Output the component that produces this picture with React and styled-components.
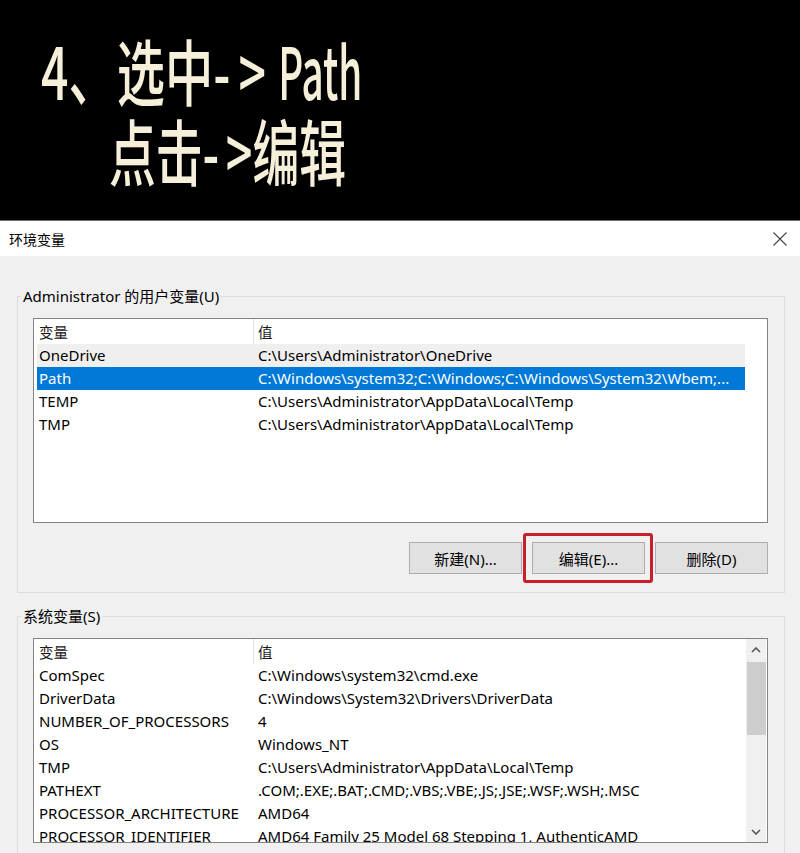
import React from 'react';
import styled, { createGlobalStyle } from 'styled-components';

const Global = createGlobalStyle`
  html, body { margin: 0; padding: 0; background: #f0f0f0; }
  body { font-family: "Noto Sans", "Noto Sans CJK SC", sans-serif; color: #000; }
  * { box-sizing: border-box; }
`;

const Page = styled.div`
  width: 800px;
  height: 853px;
  overflow: hidden;
  display: flex;
  flex-direction: column;
  background: #f0f0f0;
`;

const Banner = styled.header`
  flex-shrink: 0;
  height: 221px;
  background: #000;
  border-bottom: 1px solid #6e6e6e;
  padding-top: 29px;
  font-family: "Noto Sans CJK SC", sans-serif;
  font-size: 72px;
  line-height: 80px;
  color: #f6efd9;
  font-weight: 500;
`;

const BannerLine = styled.div`
  padding-left: ${p => p.$indent}px;
  white-space: nowrap;
`;

const Condensed = styled.span`
  display: inline-block;
  transform: scaleX(${p => p.$scale});
  transform-origin: left center;
`;

const Spaced = styled.span`
  letter-spacing: ${p => p.$gap}px;
`;

const Latin = styled.span`
  display: inline-block;
  transform: scaleX(0.8);
  transform-origin: left center;
`;

const TitleBar = styled.div`
  flex-shrink: 0;
  height: 35px;
  background: #fff;
  display: flex;
  align-items: center;
  justify-content: space-between;
  padding: 0 13px 0 9px;
  font-family: "Noto Sans CJK SC", sans-serif;
  font-size: 14px;
`;

const Body = styled.div`
  flex: 1;
  padding: 30px 15px 0 17px;
`;

const Group = styled.fieldset`
  margin: ${p => (p.$first ? 0 : 13)}px 0 0 0;
  border: 1px solid #dcdcdc;
  padding: 12px 16px 18px 3px;
  min-width: 0;
`;

const Legend = styled.legend`
  padding: 0 2px;
  font-size: 15px;
  line-height: 20px;
`;

const Content = styled.div`
  margin-left: 12px;
`;

const List = styled.div`
  height: 205px;
  background: #fff;
  border: 1px solid #838383;
  display: flex;
  overflow: hidden;
`;

const ListBody = styled.div`
  flex: 1;
  padding-left: 3px;
  overflow: hidden;
`;

const Cols = styled.div`
  width: 708px;
  display: grid;
  grid-template-columns: 216px 492px;
  font-size: 15px;
  white-space: nowrap;
`;

const HeaderRow = styled(Cols)`
  height: 25px;
  line-height: 25px;
  font-family: "Noto Sans CJK SC", sans-serif;
  font-size: 14.5px;
  color: #1a1a1a;
`;

const Row = styled(Cols)`
  height: 23px;
  line-height: 23px;
  background: ${p => (p.$selected ? '#0078d7' : p.$hover ? '#efefef' : 'transparent')};
  color: ${p => (p.$selected ? '#fff' : '#000')};
`;

const Cell = styled.div`
  padding-left: ${p => (p.$value ? 5 : 2)}px;
  overflow: hidden;
  text-overflow: clip;
`;

const HeadCell = styled(Cell)`
  border-left: ${p => (p.$value ? '1px solid #e5e5e5' : 'none')};
  padding-left: ${p => (p.$value ? 4 : 2)}px;
`;

const ButtonRow = styled.div`
  margin-top: 19px;
  display: flex;
  justify-content: flex-end;
  gap: 10px;
`;

const Button = styled.button`
  width: 113px;
  height: 32px;
  background: #e1e1e1;
  border: 1px solid #adadad;
  font-family: "Noto Sans", "Noto Sans CJK SC", sans-serif;
  font-size: 15px;
  color: #000;
  padding: 0;
`;

const Highlight = styled.span`
  position: relative;
  display: inline-flex;
  &::after {
    content: '';
    position: absolute;
    inset: -9px -8px -9px -9px;
    border: 3px solid #c8202a;
    border-radius: 3px;
    pointer-events: none;
  }
`;

const Scrollbar = styled.div`
  width: 20px;
  margin-right: 1px;
  background: #f0f0f0;
  display: flex;
  flex-direction: column;
  align-items: center;
`;

const Arrow = styled.div`
  height: 21px;
  width: 100%;
  display: flex;
  align-items: center;
  justify-content: center;
`;

const Thumb = styled.div`
  margin-top: 2px;
  width: 19px;
  height: 73px;
  background: #cdcdcd;
`;

const Spacer = styled.div`
  flex: 1;
`;

const Chevron = ({ up }) => (
  <svg width="10" height="6" viewBox="0 0 10 6">
    <path
      d={up ? 'M1 5 L5 1 L9 5' : 'M1 1 L5 5 L9 1'}
      fill="none"
      stroke="#555"
      strokeWidth="1.6"
    />
  </svg>
);

const userVars = [
  ['OneDrive', 'C:\\Users\\Administrator\\OneDrive', 'hover'],
  ['Path', 'C:\\Windows\\system32;C:\\Windows;C:\\Windows\\System32\\Wbem;...', 'selected'],
  ['TEMP', 'C:\\Users\\Administrator\\AppData\\Local\\Temp'],
  ['TMP', 'C:\\Users\\Administrator\\AppData\\Local\\Temp'],
];

const sysVars = [
  ['ComSpec', 'C:\\Windows\\system32\\cmd.exe'],
  ['DriverData', 'C:\\Windows\\System32\\Drivers\\DriverData'],
  ['NUMBER_OF_PROCESSORS', '4'],
  ['OS', 'Windows_NT'],
  ['TMP', 'C:\\Users\\Administrator\\AppData\\Local\\Temp'],
  ['PATHEXT', '.COM;.EXE;.BAT;.CMD;.VBS;.VBE;.JS;.JSE;.WSF;.WSH;.MSC'],
  ['PROCESSOR_ARCHITECTURE', 'AMD64'],
  ['PROCESSOR_IDENTIFIER', 'AMD64 Family 25 Model 68 Stepping 1, AuthenticAMD'],
];

const Table = ({ rows }) => (
  <>
    <HeaderRow>
      <HeadCell>变量</HeadCell>
      <HeadCell $value>值</HeadCell>
    </HeaderRow>
    {rows.map(([k, v, state]) => (
      <Row key={k + v} $selected={state === 'selected'} $hover={state === 'hover'}>
        <Cell>{k}</Cell>
        <Cell $value>{v}</Cell>
      </Row>
    ))}
  </>
);

export default function App() {
  return (
    <Page>
      <Global />
      <Banner>
        <BannerLine $indent={41}>
          <Condensed $scale={0.67}>
            4、选中<Spaced $gap={12}>-</Spaced><Spaced $gap={18}>&gt;</Spaced><Latin>Path</Latin>
          </Condensed>
        </BannerLine>
        <BannerLine $indent={109}>
          <Condensed $scale={0.65}>
            点击<Spaced $gap={10}>-</Spaced>&gt;编辑
          </Condensed>
        </BannerLine>
      </Banner>
      <TitleBar>
        <span>环境变量</span>
        <svg width="14" height="14" viewBox="0 0 14 14">
          <path d="M0.5 0.5 L13.5 13.5 M13.5 0.5 L0.5 13.5" stroke="#444" strokeWidth="1.1" />
        </svg>
      </TitleBar>
      <Body>
        <Group $first>
          <Legend>Administrator 的用户变量(U)</Legend>
          <Content>
            <List>
              <ListBody>
                <Table rows={userVars} />
              </ListBody>
            </List>
            <ButtonRow>
              <Button>新建(N)...</Button>
              <Highlight>
                <Button>编辑(E)...</Button>
              </Highlight>
              <Button>删除(D)</Button>
            </ButtonRow>
          </Content>
        </Group>
        <Group>
          <Legend>系统变量(S)</Legend>
          <Content>
            <List>
              <ListBody>
                <Table rows={sysVars} />
              </ListBody>
              <Scrollbar>
                <Arrow><Chevron up /></Arrow>
                <Thumb />
                <Spacer />
                <Arrow><Chevron /></Arrow>
              </Scrollbar>
            </List>
          </Content>
        </Group>
      </Body>
    </Page>
  );
}
